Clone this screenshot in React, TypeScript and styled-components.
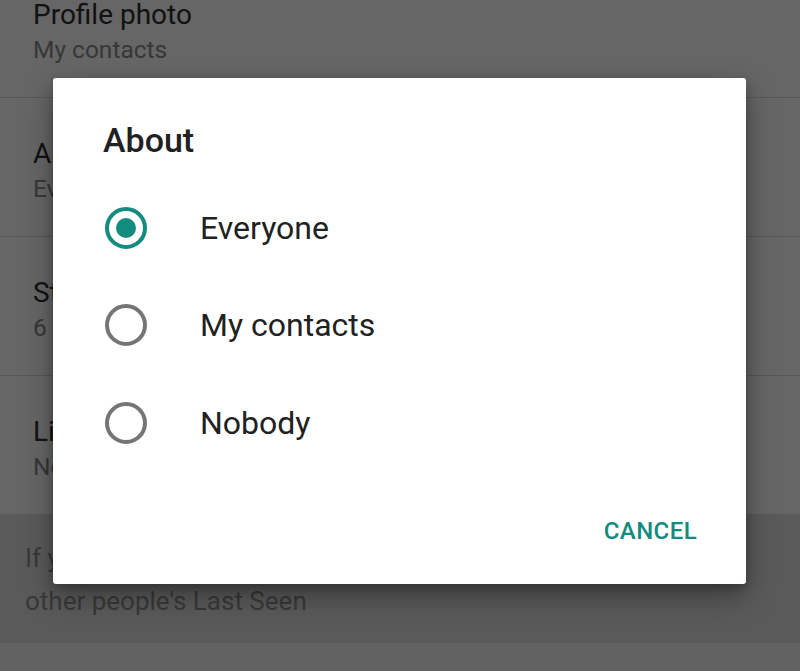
import React from "react";
import styled, { createGlobalStyle } from "styled-components";

const Global = createGlobalStyle`
  html, body { margin: 0; padding: 0; }
  body { width: 800px; height: 671px; overflow: hidden; background: #fff; font-family: Roboto, "Noto Sans", sans-serif; }
  #root { width: 800px; height: 671px; position: relative; overflow: hidden; }
`;

const Page = styled.div`
  display: flex;
  flex-direction: column;
  width: 800px;
  height: 712px;
  margin-top: -41px;
`;

const Row = styled.div`
  display: flex;
  flex-direction: column;
  justify-content: flex-start;
  height: 139px;
  padding: 38px 0 0 33px;
  box-sizing: border-box;
  border-bottom: 1px solid #dddddd;
  flex-shrink: 0;
`;

const RowTitle = styled.div`
  font-size: 28px;
  line-height: 36px;
  color: #2e2e2e;
  white-space: nowrap;
`;

const RowSub = styled.div`
  font-size: 24.5px;
  line-height: 34px;
  color: #8a8a8a;
  white-space: nowrap;
`;

const Note = styled.div`
  background: #e2e2e2;
  height: 128px;
  box-sizing: border-box;
  padding: 22px 60px 0 25px;
  font-size: 26px;
  line-height: 43px;
  color: #8f8f8f;
  flex-shrink: 0;
`;

const Footer = styled.div`
  flex: 1;
  background: #f4f4f4;
`;

const Backdrop = styled.div`
  position: absolute;
  inset: 0;
  background: rgba(0, 0, 0, 0.6);
`;

const Dialog = styled.div`
  position: absolute;
  left: 53px;
  top: 78px;
  width: 693px;
  height: 506px;
  background: #ffffff;
  border-radius: 3px;
  box-shadow: 0 12px 30px rgba(0, 0, 0, 0.35), 0 4px 10px rgba(0, 0, 0, 0.2);
  display: flex;
  flex-direction: column;
  box-sizing: border-box;
  padding: 42px 0 0 0;
`;

const DialogTitle = styled.div`
  font-size: 34px;
  font-weight: 500;
  color: #212121;
  line-height: 40px;
  padding-left: 50px;
  margin-bottom: 19px;
`;

const Options = styled.div`
  display: flex;
  flex-direction: column;
`;

const Option = styled.div`
  display: flex;
  align-items: center;
  height: 97.5px;
  padding-left: 52px;
`;

const Radio = styled.div<{ $checked?: boolean }>`
  width: 42px;
  height: 42px;
  box-sizing: border-box;
  border-radius: 50%;
  border: 4px solid ${(p) => (p.$checked ? "#128c7e" : "#757575")};
  display: flex;
  align-items: center;
  justify-content: center;
  flex-shrink: 0;
  &::after {
    content: "";
    display: ${(p) => (p.$checked ? "block" : "none")};
    width: 20px;
    height: 20px;
    border-radius: 50%;
    background: #128c7e;
  }
`;

const OptionLabel = styled.div`
  margin-left: 53px;
  font-size: 32px;
  color: #212121;
  line-height: 38px;
`;

const Actions = styled.div`
  display: flex;
  justify-content: flex-end;
  padding: 45px 49px 0 0;
`;

const Button = styled.div`
  font-size: 24px;
  font-weight: 500;
  color: #128c7e;
  letter-spacing: 0.4px;
  line-height: 28px;
`;

const options = [
  { label: "Everyone", checked: true },
  { label: "My contacts", checked: false },
  { label: "Nobody", checked: false },
];

export default function App() {
  return (
    <>
      <Global />
      <Page>
        <Row>
          <RowTitle>Profile photo</RowTitle>
          <RowSub>My contacts</RowSub>
        </Row>
        <Row>
          <RowTitle>About</RowTitle>
          <RowSub>Everyone</RowSub>
        </Row>
        <Row>
          <RowTitle>Status</RowTitle>
          <RowSub>6 contacts excluded</RowSub>
        </Row>
        <Row>
          <RowTitle>Live location</RowTitle>
          <RowSub>None</RowSub>
        </Row>
        <Note>
          If you don't share your Last Seen, you won't be able to see other people's Last Seen
        </Note>
        <Footer />
      </Page>
      <Backdrop />
      <Dialog>
        <DialogTitle>About</DialogTitle>
        <Options>
          {options.map((o) => (
            <Option key={o.label}>
              <Radio $checked={o.checked} />
              <OptionLabel>{o.label}</OptionLabel>
            </Option>
          ))}
        </Options>
        <Actions>
          <Button>CANCEL</Button>
        </Actions>
      </Dialog>
    </>
  );
}
